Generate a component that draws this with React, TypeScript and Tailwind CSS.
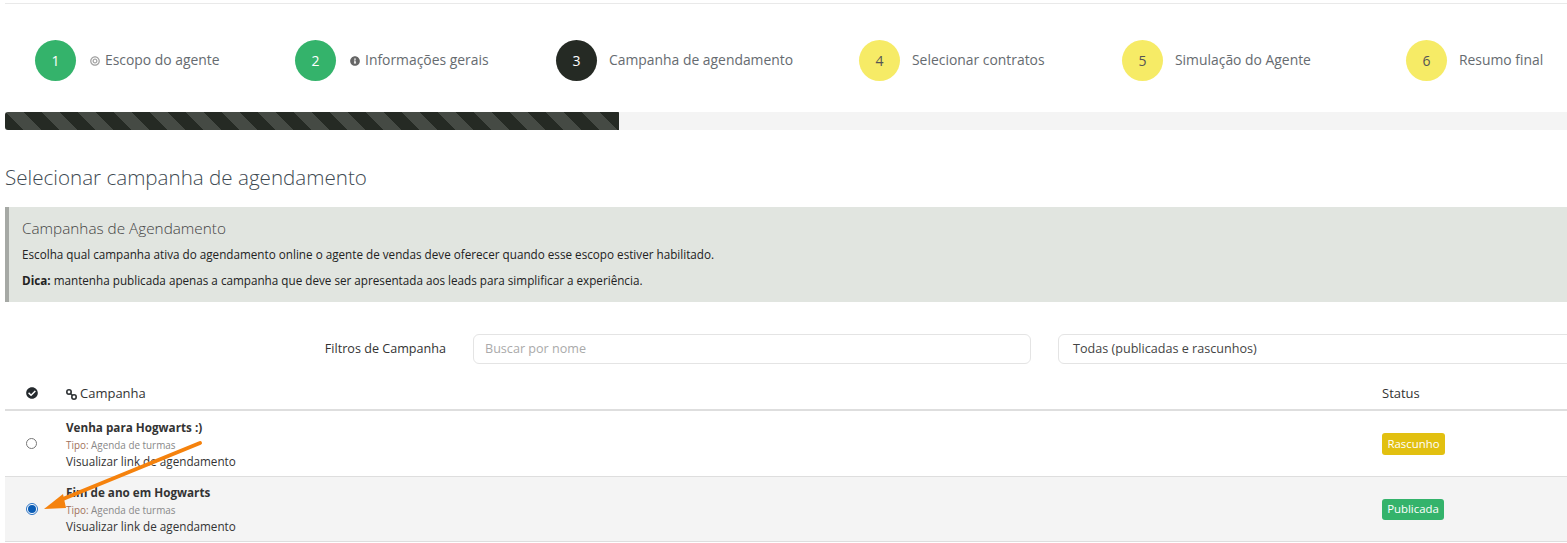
import { FaBullseye, FaCheckCircle, FaInfoCircle } from 'react-icons/fa';

type Step = {
  n: number;
  label: string;
  circle: string;
  width: string;
  icon?: 'target' | 'info';
};

const STEPS: Step[] = [
  { n: 1, label: 'Escopo do agente', circle: 'bg-[#34b36b] text-white', width: 'w-[260px]', icon: 'target' },
  { n: 2, label: 'Informações gerais', circle: 'bg-[#34b36b] text-white', width: 'w-[261px]', icon: 'info' },
  { n: 3, label: 'Campanha de agendamento', circle: 'bg-[#252a24] text-white', width: 'w-[303px]' },
  { n: 4, label: 'Selecionar contratos', circle: 'bg-[#f6eb66] text-[#555]', width: 'w-[263px]' },
  { n: 5, label: 'Simulação do Agente', circle: 'bg-[#f6eb66] text-[#555]', width: 'w-[284px]' },
  { n: 6, label: 'Resumo final', circle: 'bg-[#f6eb66] text-[#555]', width: 'w-[150px]' },
];

const ROWS = [
  { name: 'Venha para Hogwarts :)', status: 'Rascunho', badge: 'bg-[#e2c010] w-[63px] h-[22px]', selected: false, height: 'h-[66px]' },
  { name: 'Fim de ano em Hogwarts', status: 'Publicada', badge: 'bg-[#34b36b] w-[62px] h-[21px]', selected: true, height: 'h-[65px]' },
];

function LinkGlyph() {
  return (
    <svg width="11" height="11" viewBox="0 0 11 11" fill="none" stroke="#2f3336" strokeWidth="1.6">
      <circle cx="3" cy="3" r="2.2" />
      <circle cx="8" cy="8" r="2.2" />
      <line x1="4.2" y1="4.2" x2="6.8" y2="6.8" />
    </svg>
  );
}

function StepItem({ step }: { step: Step }) {
  return (
    <div className={`flex shrink-0 items-center ${step.width}`}>
      <div className={`flex h-[41px] w-[41px] shrink-0 items-center justify-center rounded-full text-[14px] ${step.circle}`}>
        {step.n}
      </div>
      {step.icon ? (
        <div className="ml-[14px] flex items-center text-[13.9px] text-[#666b70]">
          {step.icon === 'target' ? (
            <FaBullseye className="mr-[5px] mt-[1px] h-[10px] w-[10px] text-[#a3a3a3]" />
          ) : (
            <FaInfoCircle className="mr-[5px] mt-[1px] h-[10px] w-[10px] text-[#666]" />
          )}
          {step.label}
        </div>
      ) : (
        <div className="ml-[12px] text-[13.9px] text-[#666b70]">{step.label}</div>
      )}
    </div>
  );
}

export default function App() {
  return (
    <div className="relative h-[543px] w-[1567px] overflow-hidden bg-white pl-[5px] font-['Open_Sans',sans-serif] text-[12px] text-[#333]">
      <div className="h-[4px] border-b border-[#e9e9e9]" />

      <div className="flex pl-[30px] pt-[36px]">
        {STEPS.map((s) => (
          <StepItem key={s.n} step={s} />
        ))}
      </div>

      <div className="mt-[31px] h-[18px] bg-[#f4f4f4]">
        <div className="h-full w-[614px] rounded-l-[3px] bg-[#252a24] bg-[repeating-linear-gradient(45deg,#252a24_0,#252a24_12.73px,#454a44_12.73px,#454a44_25.46px)]" />
      </div>

      <h2 className="mt-[33px] text-[20.6px] font-light leading-[28px] text-[#3e4a52]">Selecionar campanha de agendamento</h2>

      <div className="mt-[16px] h-[95px] border-l-[4px] border-[#a6a9a5] bg-[#e1e5e0] pl-[13px] pt-[11px]">
        <h4 className="text-[15.3px] font-light leading-[20px] text-[#444]">Campanhas de Agendamento</h4>
        <p className="mt-[8px] text-[11.7px] leading-[16px] text-[#222]">
          Escolha qual campanha ativa do agendamento online o agente de vendas deve oferecer quando esse escopo estiver habilitado.
        </p>
        <p className="mt-[10px] text-[11.7px] leading-[16px] text-[#222]">
          <strong className="font-bold">Dica:</strong> mantenha publicada apenas a campanha que deve ser apresentada aos leads para simplificar a experiência.
        </p>
      </div>

      <div className="mt-[32px] flex h-[30px] items-center">
        <label className="w-[441px] shrink-0 text-right text-[12.6px] text-[#333]">Filtros de Campanha</label>
        <div className="ml-[27px] flex h-[30px] w-[558px] shrink-0 items-center rounded-[6px] border border-[#e4e4e4] pl-[11px] text-[12.6px] text-[#aaa]">
          Buscar por nome
        </div>
        <div className="ml-[27px] flex h-[30px] w-[540px] shrink-0 items-center rounded-[6px] border border-[#e4e4e4] pl-[14px] text-[12.6px] text-[#444]">
          Todas (publicadas e rascunhos)
        </div>
      </div>

      <div className="mt-[13px] flex h-[34px] items-center border-b-2 border-[#dedede] text-[13px] font-medium text-[#333]">
        <div className="flex w-[53px] justify-center">
          <FaCheckCircle className="h-[12px] w-[12px] text-[#252a2e]" />
        </div>
        <div className="ml-[8px] flex flex-1 items-center gap-[3px] pt-[2px]">
          <LinkGlyph />
          Campanha
        </div>
        <div className="w-[185px] pt-[2px]">Status</div>
      </div>

      {ROWS.map((r) => (
        <div
          key={r.name}
          className={`flex items-center border-b border-[#dedede] ${r.height} ${r.selected ? 'bg-[#f4f4f4]' : 'bg-white'}`}
        >
          <div className="flex w-[53px] justify-center">
            {r.selected ? (
              <div className="flex h-[12px] w-[12px] items-center justify-center rounded-full border border-[#2a72c4] bg-white">
                <div className="h-[8px] w-[8px] rounded-full bg-[#0a5cb5]" />
              </div>
            ) : (
              <div className="h-[11px] w-[11px] rounded-full border border-[#777] bg-white" />
            )}
          </div>
          <div className="ml-[8px] flex-1">
            <div className="text-[11.7px] font-bold leading-[16px] text-[#333]">{r.name}</div>
            <div className="mt-[4px] text-[9.9px] leading-[13px] text-[#888]">
              <span className="text-[#a0705a]">Tipo:</span> Agenda de turmas
            </div>
            <div className="mt-[1px] text-[11.7px] leading-[16px] text-[#333]">Visualizar link de agendamento</div>
          </div>
          <div className="w-[185px]">
            <span className={`flex items-center justify-center rounded-[3px] text-[11.4px] text-white ${r.badge}`}>
              {r.status}
            </span>
          </div>
        </div>
      ))}

      {/* seta de anotacao por cima da tabela */}
      <svg className="absolute left-0 top-0" width="1567" height="543" fill="none">
        <line x1="200" y1="443" x2="58" y2="501" stroke="#f5820d" strokeWidth="4" strokeLinecap="round" />
        <polygon points="44,509 63,494 66,508" fill="#f5820d" />
      </svg>
    </div>
  );
}
